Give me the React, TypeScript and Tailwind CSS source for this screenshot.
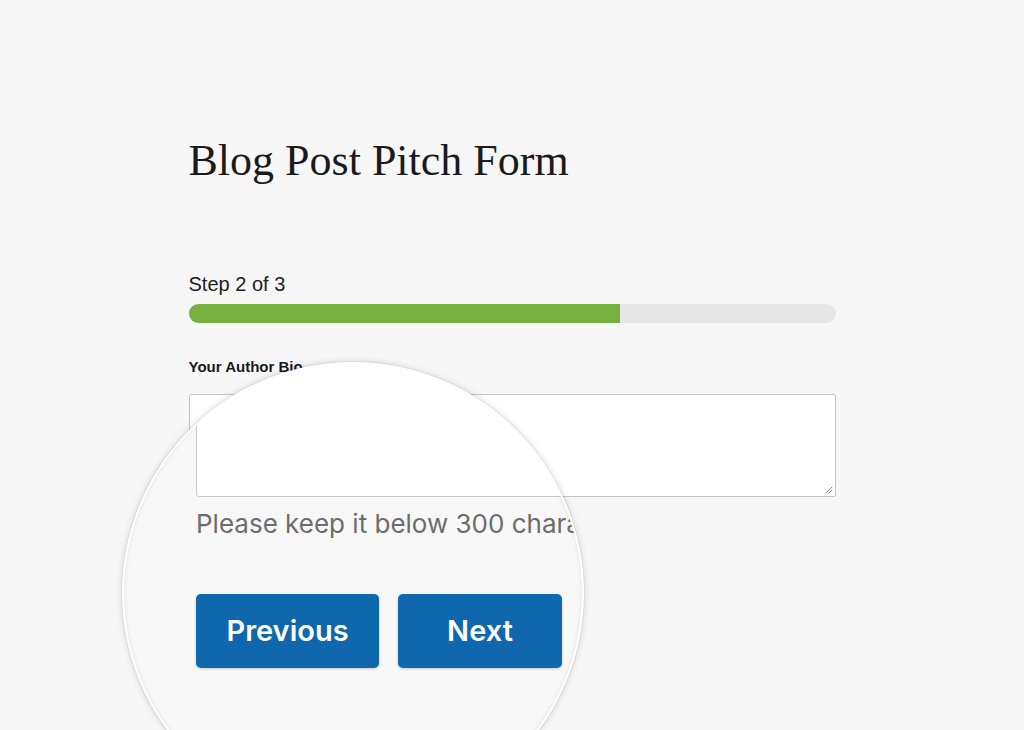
import React from 'react';

const sans = { fontFamily: '"Liberation Sans", Arial, sans-serif' };
const lensFont = { fontFamily: 'Inter, "Liberation Sans", Arial, sans-serif' };

const ResizeGrip: React.FC = () => (
  <svg width="9" height="9" viewBox="0 0 9 9" className="absolute bottom-[2px] right-[2px]">
    <path d="M8 2 L2 8 M8 5 L5 8" stroke="#8a8a8a" strokeWidth="1" strokeLinecap="round" />
  </svg>
);

const App: React.FC = () => {
  const step = 2;
  const total = 3;

  return (
    <div className="relative h-[730px] w-full overflow-hidden bg-[#f7f7f7]" style={sans}>
      {/* Form column */}
      <div className="mx-auto flex w-[647px] flex-col pt-[134px]">
        <h1
          className="text-[44px] leading-[53px] text-[#1b1b1b]"
          style={{ fontFamily: '"Liberation Serif", "Times New Roman", serif' }}
        >
          Blog Post Pitch Form
        </h1>

        <div className="mt-[85px] text-[20px] leading-[24px] text-[#222]">
          Step {step} of {total}
        </div>
        <div className="mt-[8px] h-[19px] w-full overflow-hidden rounded-full bg-[#e6e6e6]">
          <div className="h-full bg-[#76b03e]" style={{ width: `${(step / total) * 100}%` }} />
        </div>

        <label className="mt-[35px] text-[15px] font-bold leading-[18px] text-[#1a1a1a]">
          Your Author Bio
        </label>
        <div className="relative mt-[18px] h-[103px] w-full rounded-[2px] border border-[#c6c6c6] bg-white">
          <ResizeGrip />
        </div>
      </div>

      {/* Magnifier lens */}
      <div
        className="absolute left-[122px] top-[362px] h-[462px] w-[462px] overflow-hidden rounded-full border-[2px] border-white bg-[#f8f8f8] shadow-[0_0_0_1px_rgba(0,0,0,0.05),0_0_7px_rgba(0,0,0,0.16),inset_0_0_4px_rgba(0,0,0,0.10)]"
        style={lensFont}
      >
        <div className="flex flex-col pl-[72px]">
          <div className="mt-[-60px] h-[193px] w-[600px] rounded-[3px] border-[1.5px] border-[#c9c9c9] bg-white" />
          <p className="mt-[12px] whitespace-nowrap text-[26px] leading-[30px] text-[#6d6d6d]">
            Please keep it below 300 characters.
          </p>
          <div className="mt-[55px] flex gap-[19px]">
            <button className="h-[74px] w-[183px] rounded-[5px] bg-[#0f67ad] text-[29px] font-semibold text-white shadow-[0_1px_3px_rgba(0,0,0,0.2)]">
              Previous
            </button>
            <button className="h-[74px] w-[164px] rounded-[5px] bg-[#0f67ad] text-[29px] font-semibold text-white shadow-[0_1px_3px_rgba(0,0,0,0.2)]">
              Next
            </button>
          </div>
        </div>
      </div>
    </div>
  );
};

export default App;
